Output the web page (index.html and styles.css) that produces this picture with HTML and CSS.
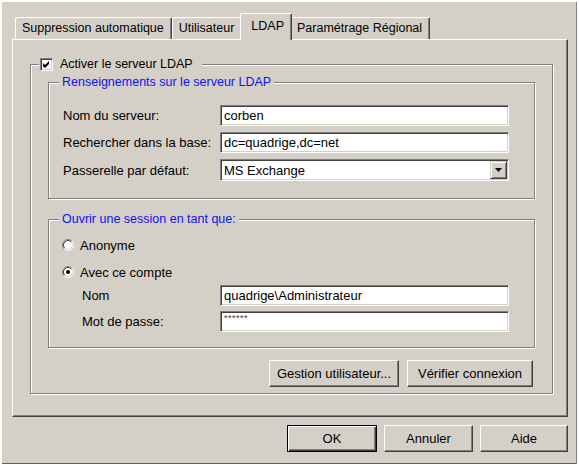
FILE: index.html
```html
<!DOCTYPE html>
<html lang="fr">
<head>
<meta charset="utf-8">
<title>LDAP</title>
<link rel="stylesheet" href="styles.css">
</head>
<body>
<div class="window">
  <div class="tabs">
    <div class="tab">Suppression automatique</div>
    <div class="tab">Utilisateur</div>
    <div class="tab active">LDAP</div>
    <div class="tab">Paramétrage Régional</div>
  </div>
  <div class="panel">
    <fieldset class="group outer">
      <legend class="legend check-legend">
        <span class="checkbox"><svg width="11" height="11" viewBox="0 0 11 11"><path d="M2 4 L4 6 L8 2 L8 5 L4 9 L2 7 Z" fill="#000"/></svg></span>
        <span>Activer le serveur LDAP</span>
      </legend>
      <div class="outer-body">
        <fieldset class="group inner">
          <legend class="legend blue">Renseignements sur le serveur LDAP</legend>
          <div class="server-body">
            <div class="label">Nom du serveur:</div>
            <div class="field">corben</div>
            <div class="label">Rechercher dans la base:</div>
            <div class="field">dc=quadrige,dc=net</div>
            <div class="label">Passerelle par défaut:</div>
            <div class="field combo">
              <span class="combo-text">MS Exchange</span>
              <span class="drop"><svg width="7" height="4" viewBox="0 0 7 4"><path d="M0 0 H7 L3.5 4 Z" fill="#000"/></svg></span>
            </div>
          </div>
        </fieldset>
        <fieldset class="group inner session">
          <legend class="legend blue">Ouvrir une session en tant que:</legend>
          <div class="session-body">
            <div class="radio-row">
              <svg class="radio" width="12" height="12" viewBox="0 0 12 12">
                <circle cx="6" cy="6" r="5" fill="#fff"/>
                <path d="M2.11 9.89 A5.5 5.5 0 0 1 9.89 2.11" fill="none" stroke="#808080"/>
                <path d="M9.89 2.11 A5.5 5.5 0 0 1 2.11 9.89" fill="none" stroke="#fff"/>
                <path d="M2.82 9.18 A4.5 4.5 0 0 1 9.18 2.82" fill="none" stroke="#404040"/>
                <path d="M9.18 2.82 A4.5 4.5 0 0 1 2.82 9.18" fill="none" stroke="#d4d0c8"/>
              </svg>
              <span>Anonyme</span>
            </div>
            <div class="radio-row">
              <svg class="radio" width="12" height="12" viewBox="0 0 12 12">
                <circle cx="6" cy="6" r="5" fill="#fff"/>
                <path d="M2.11 9.89 A5.5 5.5 0 0 1 9.89 2.11" fill="none" stroke="#808080"/>
                <path d="M9.89 2.11 A5.5 5.5 0 0 1 2.11 9.89" fill="none" stroke="#fff"/>
                <path d="M2.82 9.18 A4.5 4.5 0 0 1 9.18 2.82" fill="none" stroke="#404040"/>
                <path d="M9.18 2.82 A4.5 4.5 0 0 1 2.82 9.18" fill="none" stroke="#d4d0c8"/>
                <circle cx="6" cy="6" r="2" fill="#000"/>
              </svg>
              <span>Avec ce compte</span>
            </div>
            <div class="cred-grid">
              <div class="label">Nom</div>
              <div class="field">quadrige\Administrateur</div>
              <div class="label">Mot de passe:</div>
              <div class="field password"><span class="stars">******</span></div>
            </div>
          </div>
        </fieldset>
        <div class="actions">
          <div class="btn w-gestion">Gestion utilisateur...</div>
          <div class="btn w-verifier">Vérifier connexion</div>
        </div>
      </div>
    </fieldset>
  </div>
  <div class="footer">
    <div class="btn btn-default w-ok">OK</div>
    <div class="btn w-annuler">Annuler</div>
    <div class="btn w-aide">Aide</div>
  </div>
</div>
</body>
</html>
```

FILE: styles.css
```css
* { box-sizing: border-box; }
html, body { margin: 0; padding: 0; }
body {
  background: #fff;
  font-family: "Liberation Sans", Arial, sans-serif;
  font-size: 13px;
  color: #000;
  width: 579px;
  height: 465px;
  overflow: hidden;
}
.window {
  margin: 2px 2px 1px 2px;
  height: 462px;
  background: #d4d0c8;
  border-right: 1px solid #808080;
  border-bottom: 1px solid #606060;
  padding: 0 8px 0 10px;
  display: flex;
  flex-direction: column;
}
.tabs {
  display: flex;
  align-items: flex-end;
  height: 26px;
  margin-top: 11px;
  padding-left: 3px;
  position: relative;
  z-index: 1;
  font-size: 12.5px;
}
.tab {
  height: 22px;
  padding: 0 7px 0 6px;
  display: flex;
  align-items: center;
  border-top: 1px solid #fff;
  border-left: 1px solid #fff;
  border-right: 1px solid #404040;
  box-shadow: inset -1px 0 #808080;
  border-radius: 2px 2px 0 0;
  white-space: nowrap;
  line-height: 15px;
  background: #d4d0c8;
}
.tab.active {
  height: 27px;
  margin: 0 -2px -1px;
  padding: 0 7px 2px 10px;
  position: relative;
  z-index: 2;
}
.panel {
  border: 1px solid;
  border-color: #fff #404040 #404040 #fff;
  box-shadow: inset -1px -1px #808080;
  padding: 17px 14px 22px 17px;
}
.group {
  margin: 0;
  padding: 0;
  min-width: 0;
  border: 1px solid #808080;
  box-shadow: 1px 1px 0 #fff, inset 1px 1px 0 #fff;
}
.legend {
  padding: 0;
  line-height: 14px;
  background: #d4d0c8;
  font-size: 12.5px;
}
.check-legend {
  margin-left: 8px;
  padding: 0 9px 0 1px;
  display: flex;
  align-items: center;
  gap: 7px;
  height: 15px;
  line-height: 15px;
}
.checkbox {
  width: 13px;
  height: 13px;
  border: 1px solid;
  border-color: #808080 #fff #fff #808080;
  box-shadow: inset 1px 1px #404040, inset -1px -1px #d4d0c8;
  background: #fff;
  display: flex;
}
.outer-body { padding: 3px 17px 6px; }
.inner > .legend {
  margin-left: 10px;
  padding: 0 3px;
}
.blue { color: #1010f0; }
.server-body {
  display: grid;
  grid-template-columns: 157px 1fr;
  row-gap: 6px;
  align-items: center;
  padding: 16px 25px 17px 14px;
}
.label { white-space: nowrap; }
.field {
  height: 21px;
  border: 1px solid;
  border-color: #808080 #fff #fff #808080;
  box-shadow: inset 1px 1px #404040, inset -1px -1px #d4d0c8;
  background: #fff;
  padding-left: 3px;
  display: flex;
  align-items: center;
  white-space: nowrap;
}
.combo { height: 22px; padding-right: 1px; }
.combo-text { flex: 1; }
.drop {
  width: 17px;
  height: 18px;
  border: 1px solid;
  border-color: #d4d0c8 #404040 #404040 #d4d0c8;
  box-shadow: inset 1px 1px #fff, inset -1px -1px #808080;
  background: #d4d0c8;
  display: flex;
  align-items: center;
  justify-content: center;
}
.session { margin-top: 13px; }
.session-body { padding: 11px 25px 15px 13px; }
.radio-row {
  display: flex;
  align-items: center;
  gap: 6px;
  height: 16px;
}
.radio-row + .radio-row { margin-top: 11px; }
.cred-grid {
  display: grid;
  grid-template-columns: 138px 1fr;
  row-gap: 5px;
  align-items: center;
  margin: 5px 0 0 20px;
}
.password { align-items: flex-start; }
.stars { font-size: 9px; line-height: 12px; color: #333; letter-spacing: 0.5px; }
.actions {
  display: flex;
  justify-content: flex-end;
  gap: 8px;
  margin: 12px 2px 0 0;
}
.btn {
  height: 27px;
  display: flex;
  align-items: center;
  justify-content: center;
  border: 1px solid;
  border-color: #fff #404040 #404040 #fff;
  box-shadow: inset -1px -1px #808080;
  white-space: nowrap;
}
.btn-default {
  border-color: #000;
  box-shadow: inset 1px 1px #fff, inset -1px -1px #404040, inset -2px -2px #808080;
}
.w-gestion { width: 130px; }
.w-verifier { width: 126px; }
.w-ok { width: 90px; }
.w-annuler { width: 89px; }
.w-aide { width: 88px; }
.footer {
  display: flex;
  justify-content: flex-end;
  gap: 7px;
  margin-top: 8px;
}
```
